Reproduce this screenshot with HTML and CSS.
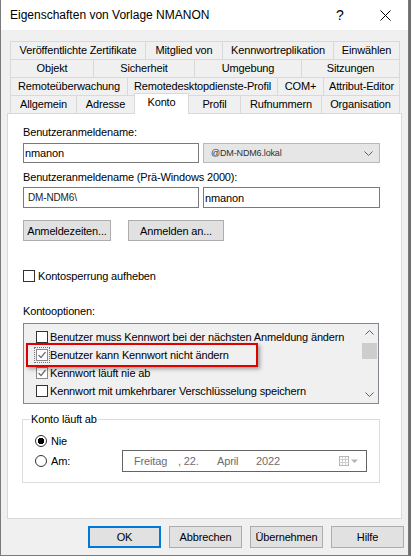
FILE: index.html
```html
<!DOCTYPE html>
<html lang="de">
<head>
    <meta charset="UTF-8">
    <meta name="viewport" content="width=device-width, initial-scale=1.0">
    <title>Eigenschaften von Vorlage NMANON</title>
    <link rel="stylesheet" href="styles.css">
</head>
<body>

    <div class="window">
        <div class="titlebar">
            <span class="title">Eigenschaften von Vorlage NMANON</span>
            <span class="capbtn help">?</span>
            <span class="capbtn close">
                <svg width="11" height="11" viewBox="0 0 11 11"><path d="M0.5 0.5L10.5 10.5M10.5 0.5L0.5 10.5" stroke="#000" stroke-width="1" fill="none"/></svg>
            </span>
        </div>

        <div class="client">
            <div class="tabs">
                <div class="tabrow row1">
                    <div class="tab">Veröffentlichte Zertifikate</div>
                    <div class="tab">Mitglied von</div>
                    <div class="tab">Kennwortreplikation</div>
                    <div class="tab">Einwählen</div>
                </div>
                <div class="tabrow row2">
                    <div class="tab">Objekt</div>
                    <div class="tab">Sicherheit</div>
                    <div class="tab">Umgebung</div>
                    <div class="tab">Sitzungen</div>
                </div>
                <div class="tabrow row3">
                    <div class="tab">Remoteüberwachung</div>
                    <div class="tab">Remotedesktopdienste-Profil</div>
                    <div class="tab">COM+</div>
                    <div class="tab">Attribut-Editor</div>
                </div>
                <div class="tabrow row4">
                    <div class="tab">Allgemein</div>
                    <div class="tab">Adresse</div>
                    <div class="tab active">Konto</div>
                    <div class="tab">Profil</div>
                    <div class="tab">Rufnummern</div>
                    <div class="tab">Organisation</div>
                </div>
            </div>

            <div class="panel">
                <div class="label first">Benutzeranmeldename:</div>
                <div class="fieldrow">
                    <div class="textbox">nmanon</div>
                    <div class="combo">
                        <span>@DM-NDM6.lokal</span>
                        <svg width="9" height="5" viewBox="0 0 9 5"><path d="M0.5 0.5L4.5 4.5L8.5 0.5" stroke="#606060" fill="none"/></svg>
                    </div>
                </div>

                <div class="label second">Benutzeranmeldename (Prä-Windows 2000):</div>
                <div class="fieldrow pre">
                    <div class="textbox domain">DM-NDM6\</div>
                    <div class="textbox wide">nmanon</div>
                </div>

                <div class="btnrow">
                    <button class="btn times">Anmeldezeiten...</button>
                    <button class="btn logon">Anmelden an...</button>
                </div>

                <div class="check unlock"><span class="box"></span>Kontosperrung aufheben</div>

                <div class="label options">Kontooptionen:</div>
                <div class="listbox">
                    <div class="items">
                        <div class="check"><span class="box"></span>Benutzer muss Kennwort bei der nächsten Anmeldung ändern</div>
                        <div class="check"><span class="box checked focus"></span>Benutzer kann Kennwort nicht ändern</div>
                        <div class="check"><span class="box checked"></span>Kennwort läuft nie ab</div>
                        <div class="check"><span class="box"></span>Kennwort mit umkehrbarer Verschlüsselung speichern</div>
                    </div>
                    <div class="scrollbar">
                        <div class="arrow">
                            <svg width="9" height="5" viewBox="0 0 9 5"><path d="M0.5 4.5L4.5 0.5L8.5 4.5" stroke="#606060" fill="none"/></svg>
                        </div>
                        <div class="thumb"></div>
                        <div class="track"></div>
                        <div class="arrow">
                            <svg width="9" height="5" viewBox="0 0 9 5"><path d="M0.5 0.5L4.5 4.5L8.5 0.5" stroke="#606060" fill="none"/></svg>
                        </div>
                    </div>
                    <div class="highlight"></div>
                </div>

                <fieldset class="expires">
                    <legend>Konto läuft ab</legend>
                    <div class="expires-body">
                        <div class="radio-row">
                            <span class="radio on"></span>Nie
                        </div>
                        <div class="radio-row date-row">
                            <div class="radio-label"><span class="radio"></span>Am:</div>
                            <div class="datepicker">
                                <span class="d-day">Freitag</span>
                                <span class="d-num">, 22.</span>
                                <span class="d-month">April</span>
                                <span class="d-year">2022</span>
                                <svg class="cal" width="20" height="10" viewBox="0 0 20 10">
                                    <rect x="0.5" y="0.5" width="9" height="9" fill="#fff" stroke="#b4b4b4"/>
                                    <path d="M0.5 3.5H9.5M0.5 6.5H9.5M3.5 0.5V9.5M6.5 0.5V9.5" stroke="#d0d0d0"/>
                                    <path d="M12 3.5H19L15.5 7Z" fill="#b4b4b4"/>
                                </svg>
                            </div>
                        </div>
                    </div>
                </fieldset>
            </div>

            <div class="footer">
                <button class="btn dlg default">OK</button>
                <button class="btn dlg">Abbrechen</button>
                <button class="btn dlg">Übernehmen</button>
                <button class="btn dlg">Hilfe</button>
            </div>
        </div>
    </div>

</body>
</html>
```

FILE: styles.css
```css
* {
    box-sizing: border-box;
}
body {
    margin: 0;
    background-color: #6e6e6e;
    font-family: 'Liberation Sans', Arial, sans-serif;
    font-size: 11px;
    letter-spacing: -0.15px;
    color: #000;
}
.window {
    width: 409px;
    height: 556px;
    background-color: #f0f0f0;
    border: 1px solid #7a7a7a;
    border-top: none;
    display: flex;
    flex-direction: column;
}

/* title bar */
.titlebar {
    height: 30px;
    flex-shrink: 0;
    background-color: #fff;
    display: flex;
    align-items: center;
    padding-left: 9px;
    font-size: 12px;
    letter-spacing: 0;
}
.title {
    flex: 1;
}
.capbtn {
    width: 46px;
    height: 30px;
    display: flex;
    align-items: center;
    justify-content: center;
}
.help {
    font-size: 14px;
    padding-left: 2px;
}

/* client area */
.client {
    flex: 1;
    display: flex;
    flex-direction: column;
    padding: 11px 6px 7px;
}
.tabs {
    margin: 0 2px 0 3px;
}
.tabrow {
    display: grid;
    height: 18px;
}
.row1 { grid-template-columns: 135px 77px 111px 67px; }
.row2 { grid-template-columns: 83px 101px 107px 99px; }
.row3 { grid-template-columns: 117px 150px 46px 77px; }
.row4 { grid-template-columns: 66px 58px 55px 51px 81px 79px; }
.tab {
    border-top: 1px solid #d9d9d9;
    border-left: 1px solid #d9d9d9;
    background-color: #f0f0f0;
    text-align: center;
    line-height: 17px;
    white-space: nowrap;
    overflow: hidden;
}
.tab:last-child {
    border-right: 1px solid #d9d9d9;
}
.tab.active {
    background-color: #fff;
    border-right: 1px solid #d9d9d9;
    margin: -2px 0 -1px;
    position: relative;
    z-index: 1;
}
.tab.active + .tab {
    border-left: none;
}

.panel {
    height: 406px;
    background-color: #fff;
    border: 1px solid #d9d9d9;
    padding: 0 15px;
}
.label {
    line-height: 13px;
}
.label.first { margin-top: 12px; }
.label.second { margin-top: 8px; }
.label.options { margin-top: 22px; }

.fieldrow {
    display: flex;
    gap: 4px;
    margin-top: 4px;
    height: 20px;
}
.fieldrow.pre {
    margin-top: 3px;
    height: 21px;
}
.textbox {
    width: 176px;
    border: 1px solid #7a7a7a;
    background-color: #fff;
    padding-left: 1px;
    display: flex;
    align-items: center;
}
.textbox.domain {
    font-size: 10px;
    padding-left: 4px;
    color: #222;
}
.textbox.wide {
    width: 177px;
}
.combo {
    width: 177px;
    border: 1px solid #b9b9b9;
    background-color: #e6e6e6;
    display: flex;
    align-items: center;
    justify-content: space-between;
    padding: 0 6px 0 7px;
    font-size: 9px;
    color: #333;
}

.btn {
    font-family: inherit;
    font-size: 11px;
    letter-spacing: inherit;
    color: #000;
    background-color: #e1e1e1;
    border: 1px solid #adadad;
    padding: 0;
    margin: 0;
}
.btnrow {
    display: flex;
    gap: 17px;
    margin-top: 12px;
    height: 21px;
}
.btn.times { width: 88px; }
.btn.logon { width: 96px; }

.check {
    display: flex;
    align-items: center;
    height: 14px;
    line-height: 14px;
    white-space: nowrap;
}
.check.unlock {
    margin-top: 28px;
}
.box {
    width: 12px;
    height: 12px;
    border: 1px solid #333;
    background-color: #fff;
    margin-right: 3px;
    flex-shrink: 0;
}
.box.checked {
    border-color: #8a8a8a;
    background: #fff url("data:image/svg+xml,%3Csvg xmlns='http://www.w3.org/2000/svg' width='10' height='10'%3E%3Cpath d='M1.5 5L4 7.5L8.5 2' stroke='%23707070' stroke-width='1.2' fill='none'/%3E%3C/svg%3E") center no-repeat;
}
.box.focus {
    outline: 1px dotted #777;
    outline-offset: 1px;
}

.listbox {
    position: relative;
    margin-top: 5px;
    width: 356px;
    height: 81px;
    border: 1px solid #828790;
    background-color: #f0f0f0;
    display: flex;
}
.items {
    flex: 1;
    padding: 4px 0 0 12px;
}
.items .check {
    height: 18px;
}
.items .box {
    margin-right: 2px;
}
.scrollbar {
    width: 17px;
    display: flex;
    flex-direction: column;
}
.scrollbar .arrow {
    height: 17px;
    display: flex;
    align-items: center;
    justify-content: center;
}
.scrollbar .thumb {
    height: 16px;
    margin: 2px 1px 0;
    background-color: #cdcdcd;
}
.scrollbar .track {
    flex: 1;
}
.highlight {
    position: absolute;
    left: 2px;
    top: 19px;
    width: 232px;
    height: 24px;
    border: 2px solid #e00000;
    box-shadow: 2px 2px 4px rgba(0, 0, 0, 0.35);
}

.expires {
    margin: 9px 0 0 -1px;
    padding: 0;
    width: 358px;
    height: 70px;
    border: 1px solid #dcdcdc;
    min-width: 0;
}
.expires legend {
    margin-left: 7px;
    padding: 0 1px;
    line-height: 12px;
}
.expires-body {
    padding: 9px 0 0 12px;
}
.radio-row {
    display: flex;
    align-items: center;
    height: 14px;
}
.radio {
    width: 12px;
    height: 12px;
    border: 1px solid #333;
    border-radius: 50%;
    background-color: #fff;
    margin-right: 4px;
    flex-shrink: 0;
}
.radio.on {
    background: radial-gradient(circle, #000 0 3px, #fff 3.5px);
}
.date-row {
    height: 22px;
    margin-top: 2px;
}
.radio-label {
    width: 87px;
    display: flex;
    align-items: center;
}
.datepicker {
    width: 245px;
    height: 22px;
    border: 1px solid #646464;
    background-color: #fff;
    display: flex;
    align-items: center;
    padding-left: 11px;
    color: #6d6d6d;
    white-space: nowrap;
}
.d-day { width: 44px; }
.d-num { width: 39px; }
.d-month { width: 39px; }
.d-year { width: 82px; }
.cal {
    margin-left: 1px;
}

.footer {
    display: flex;
    justify-content: flex-end;
    gap: 8px;
    margin: 7px -2px 0 0;
    height: 22px;
}
.btn.dlg {
    width: 73px;
}
.btn.default {
    border: 2px solid #0078d7;
}
```
